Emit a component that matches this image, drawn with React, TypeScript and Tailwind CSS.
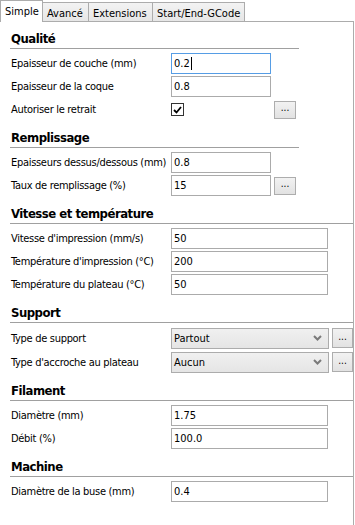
import React from "react";

const FONT = "font-['DejaVu_Sans_Condensed','DejaVu_Sans',sans-serif]";

type Row =
  | { kind: "input"; label: string; value: string; wide?: boolean; focus?: boolean; more?: boolean }
  | { kind: "check"; label: string; more?: boolean }
  | { kind: "select"; label: string; value: string };

type Section = { title: string; narrow?: boolean; rows: Row[] };

const SECTIONS: Section[] = [
  {
    title: "Qualité",
    narrow: true,
    rows: [
      { kind: "input", label: "Epaisseur de couche (mm)", value: "0.2", focus: true },
      { kind: "input", label: "Epaisseur de la coque", value: "0.8" },
      { kind: "check", label: "Autoriser le retrait", more: true },
    ],
  },
  {
    title: "Remplissage",
    narrow: true,
    rows: [
      { kind: "input", label: "Epaisseurs dessus/dessous (mm)", value: "0.8" },
      { kind: "input", label: "Taux de remplissage (%)", value: "15", more: true },
    ],
  },
  {
    title: "Vitesse et température",
    rows: [
      { kind: "input", label: "Vitesse d'impression (mm/s)", value: "50", wide: true },
      { kind: "input", label: "Température d'impression (°C)", value: "200", wide: true },
      { kind: "input", label: "Température du plateau (°C)", value: "50", wide: true },
    ],
  },
  {
    title: "Support",
    rows: [
      { kind: "select", label: "Type de support", value: "Partout" },
      { kind: "select", label: "Type d'accroche au plateau", value: "Aucun" },
    ],
  },
  {
    title: "Filament",
    rows: [
      { kind: "input", label: "Diamètre (mm)", value: "1.75", wide: true },
      { kind: "input", label: "Débit (%)", value: "100.0", wide: true },
    ],
  },
  {
    title: "Machine",
    rows: [{ kind: "input", label: "Diamètre de la buse (mm)", value: "0.4", wide: true }],
  },
];

const TABS = [
  { name: "Simple", w: "w-[43px]" },
  { name: "Avancé", w: "w-[46px]" },
  { name: "Extensions", w: "w-[64px]" },
  { name: "Start/End-GCode", w: "w-[92px]" },
];

const MoreButton = ({ tall }: { tall?: boolean }) => (
  <div
    className={
      tall
        ? "ml-[3px] flex h-[20px] w-[21px] items-center justify-center border border-[#adadad] bg-gradient-to-b from-[#f2f2f2] to-[#e2e2e2] text-[10px] leading-none text-black"
        : "ml-[3px] flex h-[18px] w-[22px] items-center justify-center border border-[#adadad] bg-gradient-to-b from-[#f2f2f2] to-[#e2e2e2] text-[10px] leading-none text-black"
    }
  >
    <span className="-mt-[3px]">...</span>
  </div>
);

const Control = ({ row }: { row: Row }) => {
  if (row.kind === "check") {
    return (
      <div className="flex h-full items-center">
        <div className="flex h-[13px] w-[13px] items-center justify-center border border-[#333333] bg-white">
          <svg width="9" height="8" viewBox="0 0 9 8">
            <path d="M1 4 L3.5 6.5 L8 1" fill="none" stroke="#000" strokeWidth="1.8" />
          </svg>
        </div>
        <div className="ml-[87px]">
          <MoreButton />
        </div>
      </div>
    );
  }
  if (row.kind === "select") {
    return (
      <div className="flex h-full items-center">
        <div className="flex h-[21px] w-[158px] items-center justify-between border border-[#acacac] bg-gradient-to-b from-[#f0f0f0] to-[#e5e5e5] pl-[2px] pr-[6px] text-black">
          <span>{row.value}</span>
          <svg width="9" height="6" viewBox="0 0 9 6">
            <path d="M1 1 L4.5 4.5 L8 1" fill="none" stroke="#7a7a7a" strokeWidth="2" />
          </svg>
        </div>
        <MoreButton tall />
      </div>
    );
  }
  return (
    <div className="flex h-full items-center">
      <div
        className={
          (row.wide ? "w-[157px] " : "w-[100px] ") +
          (row.focus ? "border-[#569de5] " : "border-[#ababab] ") +
          "flex h-[21px] items-center border bg-white pl-[2px] text-black"
        }
      >
        <span>{row.value}</span>
        {row.focus && <span className="ml-[1px] h-[13px] w-px bg-black" />}
      </div>
      {row.more && <MoreButton />}
    </div>
  );
};

const SectionBlock = ({ section, first }: { section: Section; first: boolean }) => (
  <div>
    <div
      className={
        (first ? "h-[27px] " : "h-[28px] ") +
        (section.narrow ? "w-[289px] " : "w-[343px] ") +
        "flex items-end border-b border-[#a0a0a0] pb-[1px] pl-[1px]"
      }
    >
      <h2 className="text-[13px] font-bold leading-[16px] tracking-[-0.5px] text-black">{section.title}</h2>
    </div>
    <div className="mt-[4px] flex flex-col gap-[2px]">
      {section.rows.map((row) => (
        <div
          key={row.label}
          className={(row.kind === "select" ? "h-[22px] " : "h-[21px] ") + "grid grid-cols-[161px_1fr] items-center"}
        >
          <span className="whitespace-nowrap pl-[1px] tracking-[-0.3px] text-black">{row.label}</span>
          <Control row={row} />
        </div>
      ))}
    </div>
  </div>
);

export default function App() {
  return (
    <div className={`${FONT} relative h-[525px] w-[355px] overflow-hidden bg-white text-[11px] leading-[13px]`}>
      <div className="flex h-[21px] items-end">
        {TABS.map((t, i) =>
          i === 0 ? (
            <div
              key={t.name}
              className={`${t.w} relative z-10 -mb-px flex h-[22px] items-start border-x border-t border-[#acacac] bg-white pl-[4px] pt-[4px] text-black`}
            >
              {t.name}
            </div>
          ) : (
            <div
              key={t.name}
              className={`${t.w} flex h-[19px] items-start border-r border-t border-[#acacac] bg-gradient-to-b from-[#f3f3f3] to-[#e6e6e6] pl-[4px] pt-[4px] text-black`}
            >
              {t.name}
            </div>
          )
        )}
      </div>
      <div className="h-[504px] w-[354px] border-r border-t border-[#acacac] pl-[10px]">
        {SECTIONS.map((s, i) => (
          <SectionBlock key={s.title} section={s} first={i === 0} />
        ))}
      </div>
    </div>
  );
}
